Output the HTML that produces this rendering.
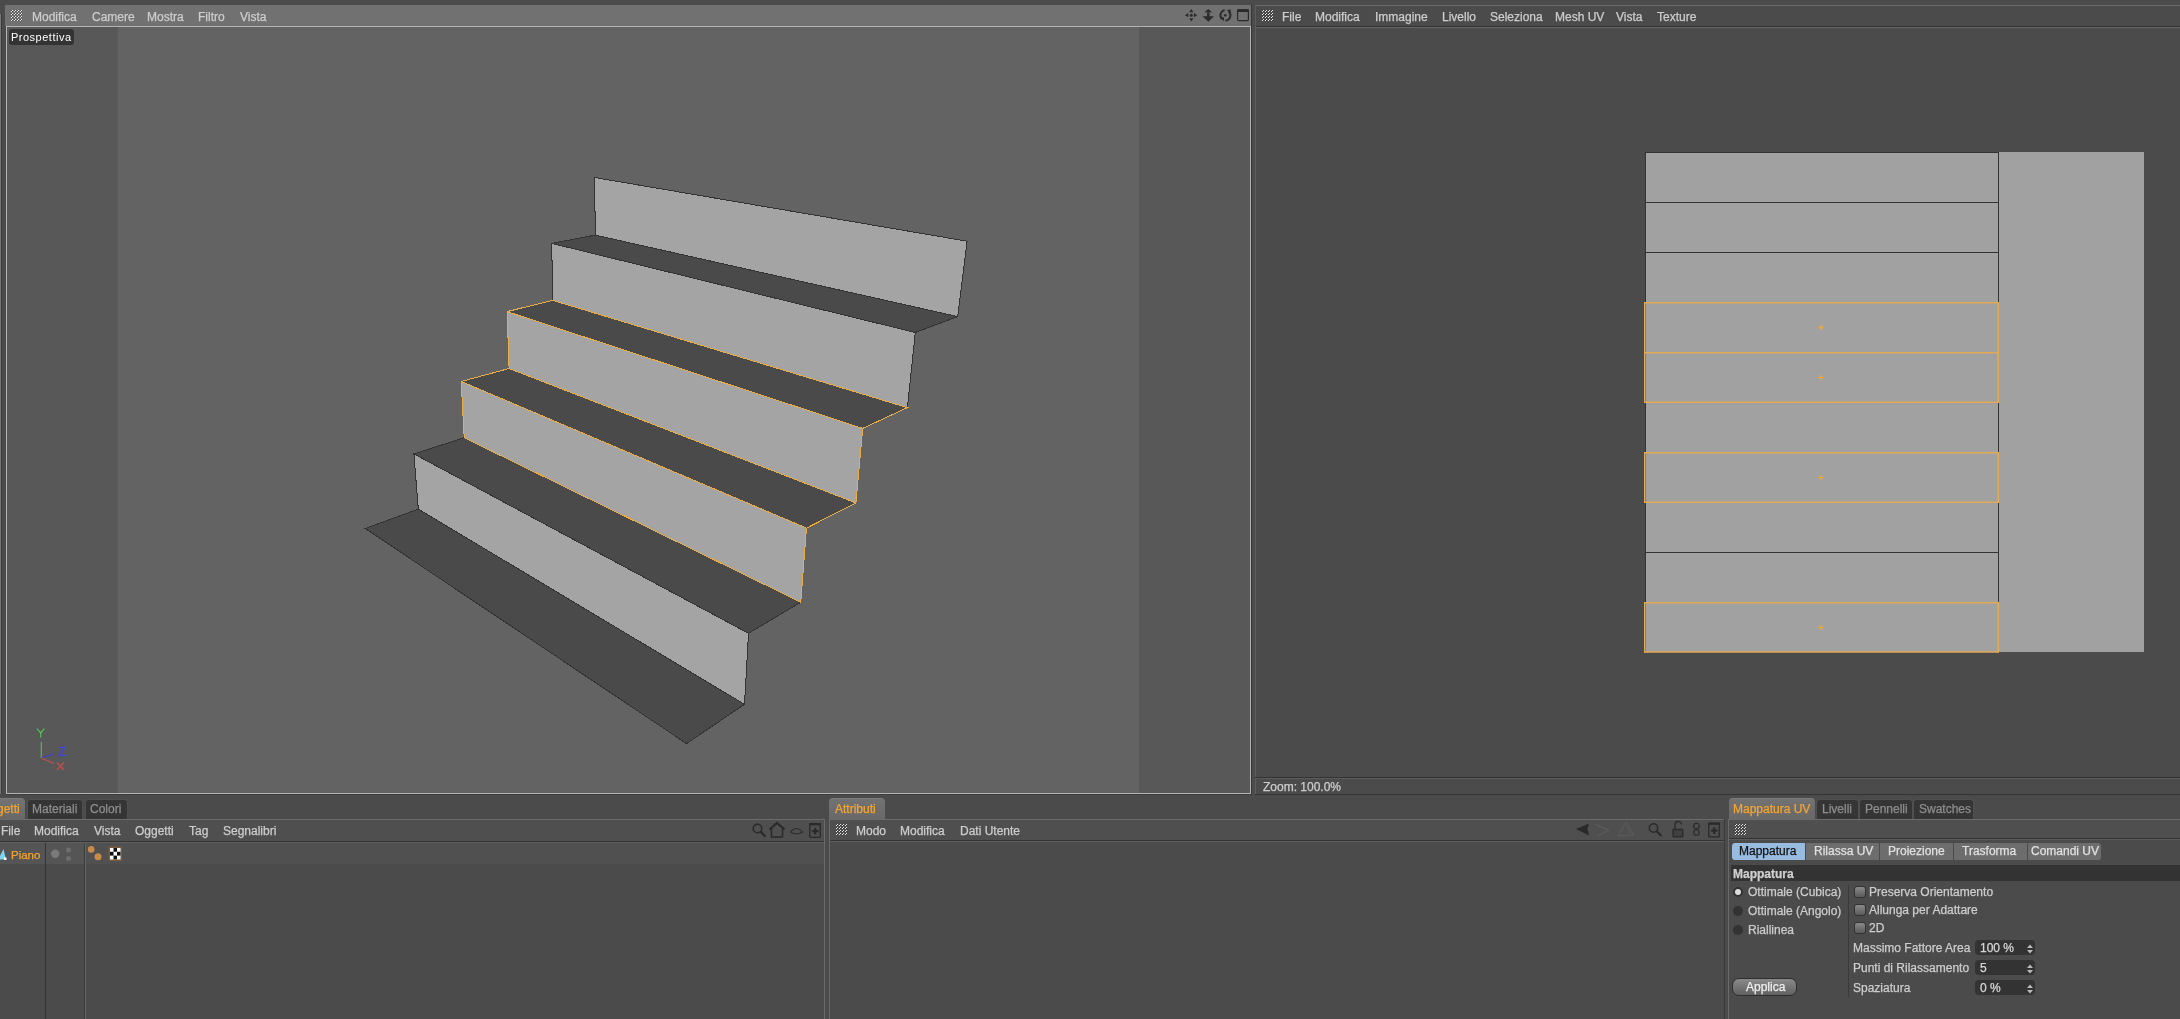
<!DOCTYPE html>
<html><head><meta charset="utf-8">
<style>
*{box-sizing:border-box;margin:0;padding:0}
html,body{width:2180px;height:1019px;overflow:hidden;background:#4b4b4b;font-family:"Liberation Sans",sans-serif;font-size:12px;color:#cdcdcd}
.a{position:absolute}
.t{position:absolute;white-space:nowrap;line-height:14px;will-change:transform;-webkit-text-stroke:0.25px currentColor}
.grip{position:absolute;width:12px;height:12px}
</style></head><body>

<!-- top strip -->

<div class="a" style="left:0;top:14px;width:1px;height:780px;background:#787878"></div>
<div class="a" style="left:1px;top:14px;width:1px;height:780px;background:#3a3a3a"></div>

<!-- ===== Viewport ===== -->
<div class="a" style="left:5px;top:5px;width:1246px;height:21px;background:#717171"></div>
<div class="grip" style="left:11px;top:10px"><svg width="12" height="12" viewBox="0 0 12 12" shape-rendering="crispEdges"><g fill="#2e2e2e" opacity="0.5"><rect x="0" y="0" width="1" height="1"/><rect x="1" y="1" width="1" height="1"/><rect x="3" y="0" width="1" height="1"/><rect x="4" y="1" width="1" height="1"/><rect x="6" y="0" width="1" height="1"/><rect x="7" y="1" width="1" height="1"/><rect x="9" y="0" width="1" height="1"/><rect x="10" y="1" width="1" height="1"/><rect x="0" y="3" width="1" height="1"/><rect x="1" y="4" width="1" height="1"/><rect x="3" y="3" width="1" height="1"/><rect x="4" y="4" width="1" height="1"/><rect x="6" y="3" width="1" height="1"/><rect x="7" y="4" width="1" height="1"/><rect x="9" y="3" width="1" height="1"/><rect x="10" y="4" width="1" height="1"/><rect x="0" y="6" width="1" height="1"/><rect x="1" y="7" width="1" height="1"/><rect x="3" y="6" width="1" height="1"/><rect x="4" y="7" width="1" height="1"/><rect x="6" y="6" width="1" height="1"/><rect x="7" y="7" width="1" height="1"/><rect x="9" y="6" width="1" height="1"/><rect x="10" y="7" width="1" height="1"/><rect x="0" y="9" width="1" height="1"/><rect x="1" y="10" width="1" height="1"/><rect x="3" y="9" width="1" height="1"/><rect x="4" y="10" width="1" height="1"/><rect x="6" y="9" width="1" height="1"/><rect x="7" y="10" width="1" height="1"/><rect x="9" y="9" width="1" height="1"/><rect x="10" y="10" width="1" height="1"/></g><g fill="#e8e8e8"><rect x="1" y="0" width="1" height="1"/><rect x="0" y="1" width="1" height="1"/><rect x="4" y="0" width="1" height="1"/><rect x="3" y="1" width="1" height="1"/><rect x="7" y="0" width="1" height="1"/><rect x="6" y="1" width="1" height="1"/><rect x="10" y="0" width="1" height="1"/><rect x="9" y="1" width="1" height="1"/><rect x="1" y="3" width="1" height="1"/><rect x="0" y="4" width="1" height="1"/><rect x="4" y="3" width="1" height="1"/><rect x="3" y="4" width="1" height="1"/><rect x="7" y="3" width="1" height="1"/><rect x="6" y="4" width="1" height="1"/><rect x="10" y="3" width="1" height="1"/><rect x="9" y="4" width="1" height="1"/><rect x="1" y="6" width="1" height="1"/><rect x="0" y="7" width="1" height="1"/><rect x="4" y="6" width="1" height="1"/><rect x="3" y="7" width="1" height="1"/><rect x="7" y="6" width="1" height="1"/><rect x="6" y="7" width="1" height="1"/><rect x="10" y="6" width="1" height="1"/><rect x="9" y="7" width="1" height="1"/><rect x="1" y="9" width="1" height="1"/><rect x="0" y="10" width="1" height="1"/><rect x="4" y="9" width="1" height="1"/><rect x="3" y="10" width="1" height="1"/><rect x="7" y="9" width="1" height="1"/><rect x="6" y="10" width="1" height="1"/><rect x="10" y="9" width="1" height="1"/><rect x="9" y="10" width="1" height="1"/></g></svg></div>
<div class="t" style="left:32px;top:10px">Modifica</div>
<div class="t" style="left:92px;top:10px">Camere</div>
<div class="t" style="left:147px;top:10px">Mostra</div>
<div class="t" style="left:198px;top:10px">Filtro</div>
<div class="t" style="left:240px;top:10px">Vista</div>

<!-- viewport frame -->
<div class="a" style="left:6px;top:26px;width:1245px;height:768px;background:#b4b4b4"></div>
<div class="a" style="left:7px;top:27px;width:1243px;height:766px;background:#585858"></div>
<div class="a" style="left:118px;top:27px;width:1021px;height:766px;background:#636363"></div>

<div class="a" style="left:9px;top:29px;width:65px;height:16px;background:#333;border-radius:3px"></div>
<div class="t" style="left:11px;top:30px;color:#fff;font-size:11px;letter-spacing:0.5px;-webkit-text-stroke:0">Prospettiva</div>


<svg class="a" style="left:0;top:0" width="1260" height="800" viewBox="0 0 1260 800">
<g fill="#a4a4a4" stroke="none">
<polygon points="594.6,177.5 967.1,241.2 957.7,316.6 595.3,235.1"/>
<polygon points="551.8,243.4 915.3,332.5 907.4,407.6 552.5,300.3"/>
<polygon points="507.1,311.6 862.7,428.4 855.9,502.9 509.1,368.5"/>
<polygon points="461.2,381.5 806.5,528.1 800.8,602.2 464.2,437.7"/>
<polygon points="413.9,453.9 748.5,633.3 744.5,704.3 418.3,509.1"/>
</g>
<g fill="#4a4a4a" stroke="none">
<polygon points="595.3,235.1 957.7,316.6 915.3,332.5 551.8,243.4"/>
<polygon points="552.5,300.3 907.4,407.6 862.7,428.4 507.1,311.6"/>
<polygon points="509.1,368.5 855.9,502.9 806.5,528.1 461.2,381.5"/>
<polygon points="464.2,437.7 800.8,602.2 748.5,633.3 413.9,453.9"/>
<polygon points="418.3,509.1 744.5,704.3 686.5,743.6 365.3,528.5"/>
</g>
<g fill="none" stroke="#333" stroke-width="1" shape-rendering="crispEdges">
<polyline points="594.6,177.5 967.1,241.2 957.7,316.6 915.3,332.5 907.4,407.6"/>
<polyline points="595.3,235.1 957.7,316.6"/>
<polyline points="594.6,177.5 595.3,235.1 551.8,243.4 552.5,300.3"/>
<polyline points="551.8,243.4 915.3,332.5"/>
<polyline points="464.2,437.7 413.9,453.9 418.3,509.1 365.3,528.5 686.5,743.6 744.5,704.3 748.5,633.3 800.8,602.2"/>
<polyline points="413.9,453.9 748.5,633.3"/>
<polyline points="418.3,509.1 744.5,704.3"/>
</g>
<g fill="none" stroke="#eaad45" stroke-width="1" shape-rendering="crispEdges">
<polyline points="552.5,300.3 907.4,407.6 862.7,428.4 855.9,502.9 806.5,528.1 800.8,602.2 464.2,437.7 461.2,381.5 509.1,368.5 507.1,311.6 552.5,300.3"/>
<polyline points="507.1,311.6 862.7,428.4"/>
<polyline points="509.1,368.5 855.9,502.9"/>
<polyline points="461.2,381.5 806.5,528.1"/>
</g>
<!-- axis -->
<g stroke-width="1.1" fill="none">
<line x1="41.3" y1="742" x2="41.3" y2="758" stroke="#52c452"/>
<polyline points="37,728.7 40.7,733 44.4,728.7" stroke="#52c452" stroke-width="1.2"/>
<line x1="40.7" y1="733" x2="40.7" y2="737.5" stroke="#52c452" stroke-width="1.2"/>
<line x1="41.3" y1="758" x2="54" y2="753.7" stroke="#4444c4" stroke-width="1.3"/>
<line x1="41.3" y1="758" x2="54" y2="763.5" stroke="#c25050" stroke-width="1.3"/>
<polyline points="59.2,747.3 64.8,747.3 59.5,755.3 65,755.3" stroke="#4646cc" stroke-width="1.7"/>
<line x1="57" y1="762.6" x2="64" y2="770" stroke="#c84a4a" stroke-width="1.4"/>
<line x1="64" y1="762.6" x2="57" y2="770" stroke="#c84a4a" stroke-width="1.4"/>
</g>
</svg>

<!-- ===== UV panel ===== -->
<div class="a" style="left:1255px;top:5px;width:925px;height:1px;background:#6a6a6a"></div>
<div class="a" style="left:1255px;top:26px;width:925px;height:1px;background:#333"></div>
<div class="a" style="left:1255px;top:27px;width:925px;height:1px;background:#686868"></div>
<div class="a" style="left:1255px;top:5px;width:1px;height:789px;background:#5c5c5c"></div>
<div class="a" style="left:1251px;top:5px;width:1px;height:790px;background:#353535"></div>
<div class="a" style="left:6px;top:794px;width:1246px;height:1px;background:#3c3c3c"></div>
<div class="grip" style="left:1262px;top:10px"><svg width="12" height="12" viewBox="0 0 12 12" shape-rendering="crispEdges"><g fill="#2e2e2e" opacity="0.5"><rect x="0" y="0" width="1" height="1"/><rect x="1" y="1" width="1" height="1"/><rect x="3" y="0" width="1" height="1"/><rect x="4" y="1" width="1" height="1"/><rect x="6" y="0" width="1" height="1"/><rect x="7" y="1" width="1" height="1"/><rect x="9" y="0" width="1" height="1"/><rect x="10" y="1" width="1" height="1"/><rect x="0" y="3" width="1" height="1"/><rect x="1" y="4" width="1" height="1"/><rect x="3" y="3" width="1" height="1"/><rect x="4" y="4" width="1" height="1"/><rect x="6" y="3" width="1" height="1"/><rect x="7" y="4" width="1" height="1"/><rect x="9" y="3" width="1" height="1"/><rect x="10" y="4" width="1" height="1"/><rect x="0" y="6" width="1" height="1"/><rect x="1" y="7" width="1" height="1"/><rect x="3" y="6" width="1" height="1"/><rect x="4" y="7" width="1" height="1"/><rect x="6" y="6" width="1" height="1"/><rect x="7" y="7" width="1" height="1"/><rect x="9" y="6" width="1" height="1"/><rect x="10" y="7" width="1" height="1"/><rect x="0" y="9" width="1" height="1"/><rect x="1" y="10" width="1" height="1"/><rect x="3" y="9" width="1" height="1"/><rect x="4" y="10" width="1" height="1"/><rect x="6" y="9" width="1" height="1"/><rect x="7" y="10" width="1" height="1"/><rect x="9" y="9" width="1" height="1"/><rect x="10" y="10" width="1" height="1"/></g><g fill="#e8e8e8"><rect x="1" y="0" width="1" height="1"/><rect x="0" y="1" width="1" height="1"/><rect x="4" y="0" width="1" height="1"/><rect x="3" y="1" width="1" height="1"/><rect x="7" y="0" width="1" height="1"/><rect x="6" y="1" width="1" height="1"/><rect x="10" y="0" width="1" height="1"/><rect x="9" y="1" width="1" height="1"/><rect x="1" y="3" width="1" height="1"/><rect x="0" y="4" width="1" height="1"/><rect x="4" y="3" width="1" height="1"/><rect x="3" y="4" width="1" height="1"/><rect x="7" y="3" width="1" height="1"/><rect x="6" y="4" width="1" height="1"/><rect x="10" y="3" width="1" height="1"/><rect x="9" y="4" width="1" height="1"/><rect x="1" y="6" width="1" height="1"/><rect x="0" y="7" width="1" height="1"/><rect x="4" y="6" width="1" height="1"/><rect x="3" y="7" width="1" height="1"/><rect x="7" y="6" width="1" height="1"/><rect x="6" y="7" width="1" height="1"/><rect x="10" y="6" width="1" height="1"/><rect x="9" y="7" width="1" height="1"/><rect x="1" y="9" width="1" height="1"/><rect x="0" y="10" width="1" height="1"/><rect x="4" y="9" width="1" height="1"/><rect x="3" y="10" width="1" height="1"/><rect x="7" y="9" width="1" height="1"/><rect x="6" y="10" width="1" height="1"/><rect x="10" y="9" width="1" height="1"/><rect x="9" y="10" width="1" height="1"/></g></svg></div>
<div class="t" style="left:1282px;top:10px">File</div>
<div class="t" style="left:1315px;top:10px">Modifica</div>
<div class="t" style="left:1375px;top:10px">Immagine</div>
<div class="t" style="left:1442px;top:10px">Livello</div>
<div class="t" style="left:1490px;top:10px">Seleziona</div>
<div class="t" style="left:1555px;top:10px">Mesh UV</div>
<div class="t" style="left:1616px;top:10px">Vista</div>
<div class="t" style="left:1657px;top:10px">Texture</div>


<svg class="a" style="left:1640px;top:145px" width="510" height="515" viewBox="1640 145 510 515">
<rect x="1645" y="152" width="499" height="500" fill="#a1a1a1"/>
<g stroke="#333" stroke-width="1" shape-rendering="crispEdges" fill="none">
<path d="M1645.5,152 V652 M1998.5,152 V652"/>
<path d="M1645,152.5 H1999 M1645,202.5 H1999 M1645,252.5 H1999 M1645,402.5 H1999 M1645,552.5 H1999"/>
</g>
<g stroke="#e2aa55" stroke-width="1.6" fill="none">
<path d="M1644,302.8 H1999 M1644,352.8 H1999 M1644,402.2 H1999 M1644,452.8 H1999 M1644,502.2 H1999 M1644,602.8 H1999 M1644,652 H1999"/>
<path d="M1644.8,302 V403 M1998.2,302 V403 M1644.8,452 V503 M1998.2,452 V503 M1644.8,602 V652.8 M1998.2,602 V652.8"/>
</g>
<g stroke="#eaa83a" stroke-width="1.4">
<path d="M1818.5,327.5 h5 M1821,325 v5"/>
<path d="M1818.5,377.5 h5 M1821,375 v5"/>
<path d="M1818.5,477.5 h5 M1821,475 v5"/>
<path d="M1818.5,627.5 h5 M1821,625 v5"/>
</g>
</svg>


<!-- status -->
<div class="a" style="left:1255px;top:777px;width:925px;height:1px;background:#333"></div>
<div class="a" style="left:1255px;top:778px;width:925px;height:1px;background:#5c5c5c"></div>
<div class="a" style="left:1255px;top:794px;width:925px;height:1px;background:#333"></div>
<div class="t" style="left:1263px;top:780px">Zoom: 100.0%</div>


<!-- ===== Bottom: Object manager ===== -->
<div class="a" style="left:-10px;top:798px;width:35px;height:21px;background:linear-gradient(#727272,#686868);border-top:1px solid #7c7c7c;border-radius:4px 4px 0 0"></div>
<div class="t" style="left:-19px;top:802px;color:#f4a531">Oggetti</div>
<div class="a" style="left:27px;top:799px;width:56px;height:20px;background:#353535;border-radius:4px 4px 0 0;border:1px solid #505050;border-bottom:none"></div>
<div class="t" style="left:32px;top:802px;color:#8e8e8e">Materiali</div>
<div class="a" style="left:85px;top:799px;width:43px;height:20px;background:#353535;border-radius:4px 4px 0 0;border:1px solid #505050;border-bottom:none"></div>
<div class="t" style="left:90px;top:802px;color:#8e8e8e">Colori</div>

<div class="a" style="left:0;top:819px;width:825px;height:24px;background:#4f4f4f;border-top:1px solid #6c6c6c;border-bottom:1px solid #5e5e5e"></div>
<div class="a" style="left:0;top:841px;width:825px;height:1px;background:#333"></div>
<div class="t" style="left:1px;top:824px">File</div>
<div class="t" style="left:34px;top:824px">Modifica</div>
<div class="t" style="left:94px;top:824px">Vista</div>
<div class="t" style="left:135px;top:824px">Oggetti</div>
<div class="t" style="left:189px;top:824px">Tag</div>
<div class="t" style="left:223px;top:824px">Segnalibri</div>

<div class="a" style="left:0;top:843px;width:85px;height:21px;background:#555"></div>
<div class="a" style="left:85px;top:843px;width:740px;height:21px;background:#505050"></div>
<div class="a" style="left:45px;top:843px;width:1px;height:176px;background:#333"></div>
<div class="a" style="left:84px;top:843px;width:1px;height:176px;background:#3a3a3a"></div>
<div class="a" style="left:85px;top:843px;width:1px;height:176px;background:#666"></div>
<div class="a" style="left:824px;top:819px;width:1px;height:200px;background:#6a6a6a"></div>


<svg class="a" style="left:0;top:843px" width="130" height="21" viewBox="0 0 130 21">
<path d="M-2,16.5 L3.5,6 L6,16.5Z" fill="#7fd4f0"/>
<rect x="4" y="14.5" width="2.5" height="2.5" fill="#fff"/>
<circle cx="55.2" cy="10.7" r="4.2" fill="#7a7a7a"/>
<circle cx="68.5" cy="7" r="2.5" fill="#6e6e6e"/>
<circle cx="68.5" cy="15.5" r="2.5" fill="#6e6e6e"/>
<circle cx="91.2" cy="6.4" r="3.3" fill="#c8894a"/>
<circle cx="98" cy="13.7" r="3.5" fill="#c8894a"/>
<rect x="108.5" y="3.5" width="13.5" height="14.5" rx="1" fill="#7a5a3a"/>
<rect x="110" y="5" width="10.5" height="11.5" fill="#fff"/>
<g fill="#111"><rect x="113.5" y="5" width="3.5" height="3.8"/><rect x="110" y="8.8" width="3.5" height="3.8"/><rect x="117" y="8.8" width="3.5" height="3.8"/><rect x="113.5" y="12.6" width="3.5" height="3.8"/></g>
</svg>
<div class="t" style="left:11px;top:848px;color:#f4a531;font-size:11.5px">Piano</div>

<!-- ===== Attributes ===== -->
<div class="a" style="left:829px;top:798px;width:56px;height:22px;background:linear-gradient(#727272,#686868);border-top:1px solid #7c7c7c;border-radius:4px 4px 0 0"></div>
<div class="t" style="left:835px;top:802px;color:#f4a531">Attributi</div>
<div class="a" style="left:829px;top:819px;width:896px;height:22px;background:#4f4f4f;border-top:1px solid #6c6c6c"></div>
<div class="a" style="left:829px;top:840px;width:896px;height:1px;background:#333"></div>
<div class="a" style="left:829px;top:841px;width:896px;height:1px;background:#5e5e5e"></div>
<div class="a" style="left:829px;top:819px;width:1px;height:200px;background:#6a6a6a"></div>
<div class="grip" style="left:836px;top:824px"><svg width="12" height="12" viewBox="0 0 12 12" shape-rendering="crispEdges"><g fill="#2e2e2e" opacity="0.5"><rect x="0" y="0" width="1" height="1"/><rect x="1" y="1" width="1" height="1"/><rect x="3" y="0" width="1" height="1"/><rect x="4" y="1" width="1" height="1"/><rect x="6" y="0" width="1" height="1"/><rect x="7" y="1" width="1" height="1"/><rect x="9" y="0" width="1" height="1"/><rect x="10" y="1" width="1" height="1"/><rect x="0" y="3" width="1" height="1"/><rect x="1" y="4" width="1" height="1"/><rect x="3" y="3" width="1" height="1"/><rect x="4" y="4" width="1" height="1"/><rect x="6" y="3" width="1" height="1"/><rect x="7" y="4" width="1" height="1"/><rect x="9" y="3" width="1" height="1"/><rect x="10" y="4" width="1" height="1"/><rect x="0" y="6" width="1" height="1"/><rect x="1" y="7" width="1" height="1"/><rect x="3" y="6" width="1" height="1"/><rect x="4" y="7" width="1" height="1"/><rect x="6" y="6" width="1" height="1"/><rect x="7" y="7" width="1" height="1"/><rect x="9" y="6" width="1" height="1"/><rect x="10" y="7" width="1" height="1"/><rect x="0" y="9" width="1" height="1"/><rect x="1" y="10" width="1" height="1"/><rect x="3" y="9" width="1" height="1"/><rect x="4" y="10" width="1" height="1"/><rect x="6" y="9" width="1" height="1"/><rect x="7" y="10" width="1" height="1"/><rect x="9" y="9" width="1" height="1"/><rect x="10" y="10" width="1" height="1"/></g><g fill="#e8e8e8"><rect x="1" y="0" width="1" height="1"/><rect x="0" y="1" width="1" height="1"/><rect x="4" y="0" width="1" height="1"/><rect x="3" y="1" width="1" height="1"/><rect x="7" y="0" width="1" height="1"/><rect x="6" y="1" width="1" height="1"/><rect x="10" y="0" width="1" height="1"/><rect x="9" y="1" width="1" height="1"/><rect x="1" y="3" width="1" height="1"/><rect x="0" y="4" width="1" height="1"/><rect x="4" y="3" width="1" height="1"/><rect x="3" y="4" width="1" height="1"/><rect x="7" y="3" width="1" height="1"/><rect x="6" y="4" width="1" height="1"/><rect x="10" y="3" width="1" height="1"/><rect x="9" y="4" width="1" height="1"/><rect x="1" y="6" width="1" height="1"/><rect x="0" y="7" width="1" height="1"/><rect x="4" y="6" width="1" height="1"/><rect x="3" y="7" width="1" height="1"/><rect x="7" y="6" width="1" height="1"/><rect x="6" y="7" width="1" height="1"/><rect x="10" y="6" width="1" height="1"/><rect x="9" y="7" width="1" height="1"/><rect x="1" y="9" width="1" height="1"/><rect x="0" y="10" width="1" height="1"/><rect x="4" y="9" width="1" height="1"/><rect x="3" y="10" width="1" height="1"/><rect x="7" y="9" width="1" height="1"/><rect x="6" y="10" width="1" height="1"/><rect x="10" y="9" width="1" height="1"/><rect x="9" y="10" width="1" height="1"/></g></svg></div>
<div class="t" style="left:856px;top:824px">Modo</div>
<div class="t" style="left:900px;top:824px">Modifica</div>
<div class="t" style="left:960px;top:824px">Dati Utente</div>
<div class="a" style="left:1724px;top:819px;width:1px;height:200px;background:#3a3a3a"></div>


<!-- viewport icons -->
<svg class="a" style="left:1183px;top:7px" width="70" height="16" viewBox="0 0 70 16">
<g fill="#2b2b2b">
<path d="M8.3,2 L10.4,5.3 L6.2,5.3Z M8.3,14.5 L10.4,11.2 L6.2,11.2Z M2,8.2 L5.3,6.1 L5.3,10.3Z M14.2,8.2 L10.9,6.1 L10.9,10.3Z"/>
<circle cx="8.3" cy="8.2" r="1.5"/>
<path d="M25.3,1.9 L29.2,5.2 L21.5,5.2Z M25.3,14.8 L31,9.3 L26.5,9.3 L26.5,5 L24.1,5 L24.1,9.3 L19.5,9.3Z"/>
<circle cx="42.2" cy="8.3" r="1.3"/>
<rect x="54.6" y="2.8" width="10.8" height="10.8" rx="1.2" fill="none" stroke="#2b2b2b" stroke-width="1.2"/>
<rect x="54" y="2.3" width="12" height="2.6" rx="1"/>
<path d="M36.6,10.6 L41.2,14.2 L40.8,10.2Z M43.8,2.9 L47.8,2.4 L47.4,6.6Z"/>
</g>
<g fill="none" stroke="#2b2b2b" stroke-width="1.9">
<path d="M41.7,3.1 A5.3,5.3 0 0 0 38.9,12"/>
<path d="M42.6,13.6 A5.3,5.3 0 0 0 45.6,4.3"/>
</g>
</svg>

<!-- object manager icons -->
<svg class="a" style="left:750px;top:820px" width="76" height="20" viewBox="0 0 76 20">
<g fill="none" stroke="#2a2a2a" stroke-width="1.5">
<circle cx="7.5" cy="8.5" r="4.3"/>
<path d="M10.5,11.5 L15.5,16.8" stroke-width="2.2"/>
<path d="M19.5,9.5 L27,3 L34.5,9.5" stroke-width="2.2"/>
<path d="M21.5,8.5 L21.5,17 L32.5,17 L32.5,8.5"/>
<path d="M40.5,12 Q46.5,5 52.5,12 Q46.5,16 40.5,12" stroke-width="1.1"/>
<rect x="59.8" y="3.8" width="10.5" height="13.5" rx="0.5" stroke-width="1.3"/>
</g>
<g fill="#2a2a2a">
<rect x="59.5" y="3" width="11.5" height="2.3"/>
<rect x="62" y="10" width="6.5" height="2.2"/><rect x="64.1" y="7.9" width="2.2" height="6.5"/>
</g>
</svg>

<!-- attributes icons -->
<svg class="a" style="left:1572px;top:819px" width="152" height="20" viewBox="0 0 152 20">
<g fill="#2a2a2a"><path d="M4,10 L17,4.5 L15.5,10 L17,16.5Z"/></g>
<g fill="none" stroke="#5c5c5c" stroke-width="1">
<path d="M23,5 L37,11 L25,17 M25,6 L35,11"/>
<path d="M54,3 L62,16 L46,17Z M54,6 L59,15"/>
</g>
<g fill="none" stroke="#2a2a2a" stroke-width="1.5">
<circle cx="81.5" cy="9" r="4.2"/>
<path d="M84.5,12 L89.5,17" stroke-width="2.2"/>
<path d="M103,10.5 L103,6 A3.2,3.2 0 0 1 109.5,5.5" stroke-width="1.3"/>
<circle cx="124.5" cy="7" r="2.8" stroke-width="1.1"/>
<circle cx="124.5" cy="13.5" r="2.8" stroke-width="1.1"/>
<rect x="136.8" y="4.3" width="10.5" height="13.5" rx="0.5" stroke-width="1.3"/>
</g>
<g fill="#2a2a2a">
<rect x="101" y="10.5" width="9.8" height="7.3" rx="0.5" fill="#404040" stroke="#2a2a2a" stroke-width="1.3"/>
<rect x="136.5" y="3.5" width="11.5" height="2.3"/>
<rect x="139" y="10.5" width="6.5" height="2.2"/><rect x="141.1" y="8.4" width="2.2" height="6.5"/>
</g>
</svg>

<!-- ===== UV tools ===== -->
<div class="a" style="left:1729px;top:798px;width:86px;height:22px;background:linear-gradient(#727272,#686868);border-top:1px solid #7c7c7c;border-radius:4px 4px 0 0"></div>
<div class="t" style="left:1733px;top:802px;color:#f4a531">Mappatura UV</div>
<div class="a" style="left:1816px;top:799px;width:43px;height:20px;background:#353535;border-radius:4px 4px 0 0;border:1px solid #505050;border-bottom:none"></div>
<div class="t" style="left:1822px;top:802px;color:#8e8e8e">Livelli</div>
<div class="a" style="left:1859px;top:799px;width:54px;height:20px;background:#353535;border-radius:4px 4px 0 0;border:1px solid #505050;border-bottom:none"></div>
<div class="t" style="left:1865px;top:802px;color:#8e8e8e">Pennelli</div>
<div class="a" style="left:1913px;top:799px;width:61px;height:20px;background:#353535;border-radius:4px 4px 0 0;border:1px solid #505050;border-bottom:none"></div>
<div class="t" style="left:1919px;top:802px;color:#8e8e8e">Swatches</div>
<div class="a" style="left:1728px;top:819px;width:452px;height:20px;background:#4f4f4f;border-top:1px solid #6c6c6c;border-bottom:1px solid #333"></div>
<div class="a" style="left:1728px;top:839px;width:452px;height:1px;background:#5c5c5c"></div>
<div class="a" style="left:1728px;top:819px;width:1px;height:200px;background:#6a6a6a"></div>
<div class="grip" style="left:1735px;top:824px"><svg width="12" height="12" viewBox="0 0 12 12" shape-rendering="crispEdges"><g fill="#2e2e2e" opacity="0.5"><rect x="0" y="0" width="1" height="1"/><rect x="1" y="1" width="1" height="1"/><rect x="3" y="0" width="1" height="1"/><rect x="4" y="1" width="1" height="1"/><rect x="6" y="0" width="1" height="1"/><rect x="7" y="1" width="1" height="1"/><rect x="9" y="0" width="1" height="1"/><rect x="10" y="1" width="1" height="1"/><rect x="0" y="3" width="1" height="1"/><rect x="1" y="4" width="1" height="1"/><rect x="3" y="3" width="1" height="1"/><rect x="4" y="4" width="1" height="1"/><rect x="6" y="3" width="1" height="1"/><rect x="7" y="4" width="1" height="1"/><rect x="9" y="3" width="1" height="1"/><rect x="10" y="4" width="1" height="1"/><rect x="0" y="6" width="1" height="1"/><rect x="1" y="7" width="1" height="1"/><rect x="3" y="6" width="1" height="1"/><rect x="4" y="7" width="1" height="1"/><rect x="6" y="6" width="1" height="1"/><rect x="7" y="7" width="1" height="1"/><rect x="9" y="6" width="1" height="1"/><rect x="10" y="7" width="1" height="1"/><rect x="0" y="9" width="1" height="1"/><rect x="1" y="10" width="1" height="1"/><rect x="3" y="9" width="1" height="1"/><rect x="4" y="10" width="1" height="1"/><rect x="6" y="9" width="1" height="1"/><rect x="7" y="10" width="1" height="1"/><rect x="9" y="9" width="1" height="1"/><rect x="10" y="10" width="1" height="1"/></g><g fill="#e8e8e8"><rect x="1" y="0" width="1" height="1"/><rect x="0" y="1" width="1" height="1"/><rect x="4" y="0" width="1" height="1"/><rect x="3" y="1" width="1" height="1"/><rect x="7" y="0" width="1" height="1"/><rect x="6" y="1" width="1" height="1"/><rect x="10" y="0" width="1" height="1"/><rect x="9" y="1" width="1" height="1"/><rect x="1" y="3" width="1" height="1"/><rect x="0" y="4" width="1" height="1"/><rect x="4" y="3" width="1" height="1"/><rect x="3" y="4" width="1" height="1"/><rect x="7" y="3" width="1" height="1"/><rect x="6" y="4" width="1" height="1"/><rect x="10" y="3" width="1" height="1"/><rect x="9" y="4" width="1" height="1"/><rect x="1" y="6" width="1" height="1"/><rect x="0" y="7" width="1" height="1"/><rect x="4" y="6" width="1" height="1"/><rect x="3" y="7" width="1" height="1"/><rect x="7" y="6" width="1" height="1"/><rect x="6" y="7" width="1" height="1"/><rect x="10" y="6" width="1" height="1"/><rect x="9" y="7" width="1" height="1"/><rect x="1" y="9" width="1" height="1"/><rect x="0" y="10" width="1" height="1"/><rect x="4" y="9" width="1" height="1"/><rect x="3" y="10" width="1" height="1"/><rect x="7" y="9" width="1" height="1"/><rect x="6" y="10" width="1" height="1"/><rect x="10" y="9" width="1" height="1"/><rect x="9" y="10" width="1" height="1"/></g></svg></div>

<div class="a" style="left:1732px;top:843px;width:73px;height:17px;background:#98bbe0;border-radius:3px 0 0 3px"></div>
<div class="t" style="left:1739px;top:844px;color:#101010">Mappatura</div>
<div class="a" style="left:1806px;top:843px;width:73px;height:17px;background:#6d6d6d"></div>
<div class="t" style="left:1814px;top:844px;color:#e0e0e0">Rilassa UV</div>
<div class="a" style="left:1880px;top:843px;width:73px;height:17px;background:#6d6d6d"></div>
<div class="t" style="left:1888px;top:844px;color:#e0e0e0">Proiezione</div>
<div class="a" style="left:1954px;top:843px;width:73px;height:17px;background:#6d6d6d"></div>
<div class="t" style="left:1962px;top:844px;color:#e0e0e0">Trasforma</div>
<div class="a" style="left:2028px;top:843px;width:73px;height:17px;background:#6d6d6d;border-radius:0 3px 3px 0"></div>
<div class="t" style="left:2031px;top:844px;color:#e0e0e0">Comandi UV</div>

<div class="a" style="left:1731px;top:865px;width:449px;height:16px;background:#333"></div>
<div class="t" style="left:1733px;top:867px;color:#d0d0d0;font-weight:bold">Mappatura</div>

<div class="a" style="left:1733px;top:887px;width:10px;height:10px;border-radius:50%;background:#333"></div>
<div class="a" style="left:1735px;top:889px;width:6px;height:6px;border-radius:50%;background:#ddd"></div>
<div class="t" style="left:1748px;top:885px">Ottimale (Cubica)</div>
<div class="a" style="left:1733px;top:906px;width:10px;height:10px;border-radius:50%;background:#333"></div>
<div class="t" style="left:1748px;top:904px">Ottimale (Angolo)</div>
<div class="a" style="left:1733px;top:925px;width:10px;height:10px;border-radius:50%;background:#333"></div>
<div class="t" style="left:1748px;top:923px">Riallinea</div>

<div class="a" style="left:1848px;top:885px;width:1px;height:112px;background:#3a3a3a"></div>

<div class="a" style="left:1854px;top:886px;width:12px;height:12px;border-radius:3px;border:1px solid #333;background:linear-gradient(#8a8a8a,#5a5a5a)"></div>
<div class="t" style="left:1869px;top:885px">Preserva Orientamento</div>
<div class="a" style="left:1854px;top:904px;width:12px;height:12px;border-radius:3px;border:1px solid #333;background:linear-gradient(#8a8a8a,#5a5a5a)"></div>
<div class="t" style="left:1869px;top:903px">Allunga per Adattare</div>
<div class="a" style="left:1854px;top:922px;width:12px;height:12px;border-radius:3px;border:1px solid #333;background:linear-gradient(#8a8a8a,#5a5a5a)"></div>
<div class="t" style="left:1869px;top:921px">2D</div>

<div class="t" style="left:1853px;top:941px">Massimo Fattore Area</div>
<div class="a" style="left:1975px;top:940px;width:60px;height:15px;background:#333;border-radius:4px"></div>
<div class="t" style="left:1980px;top:941px;color:#d8d8d8">100 %</div>
<div class="t" style="left:1853px;top:961px">Punti di Rilassamento</div>
<div class="a" style="left:1975px;top:960px;width:60px;height:15px;background:#333;border-radius:4px"></div>
<div class="t" style="left:1980px;top:961px;color:#d8d8d8">5</div>
<div class="t" style="left:1853px;top:981px">Spaziatura</div>
<div class="a" style="left:1975px;top:980px;width:60px;height:15px;background:#333;border-radius:4px"></div>
<div class="t" style="left:1980px;top:981px;color:#d8d8d8">0 %</div>

<svg class="a" style="left:2026px;top:944px" width="8" height="10" viewBox="0 0 8 10"><path d="M1,4 L4,0.5 L7,4Z M1,6 L4,9.5 L7,6Z" fill="#bbb"/></svg>
<svg class="a" style="left:2026px;top:964px" width="8" height="10" viewBox="0 0 8 10"><path d="M1,4 L4,0.5 L7,4Z M1,6 L4,9.5 L7,6Z" fill="#bbb"/></svg>
<svg class="a" style="left:2026px;top:984px" width="8" height="10" viewBox="0 0 8 10"><path d="M1,4 L4,0.5 L7,4Z M1,6 L4,9.5 L7,6Z" fill="#bbb"/></svg>
<div class="a" style="left:1732px;top:978px;width:65px;height:18px;border-radius:7px;border:1px solid #2e2e2e;background:linear-gradient(#8a8a8a,#606060)"></div>
<div class="t" style="left:1746px;top:980px;color:#eee">Applica</div>

</body></html>
